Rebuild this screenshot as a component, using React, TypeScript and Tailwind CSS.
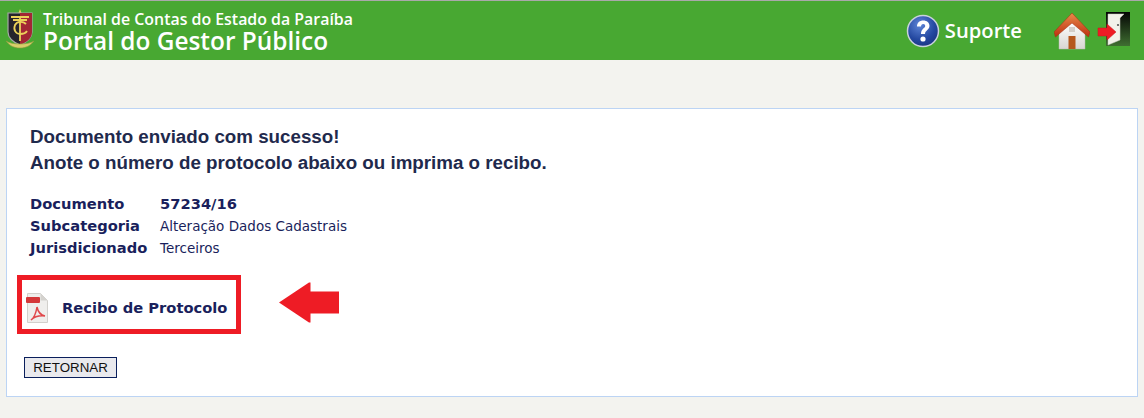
function Crest() {
  return (
    <svg width="30" height="43" viewBox="0 0 30 43" className="shrink-0">
      <path d="M15 0l1.500 4h-3z" fill="#e8d060" />
      <path d="M3 4h24v19c0 6-5 10-12 13C8 33 3 29 3 23z" fill="#26242c" stroke="#a5a8a6" strokeWidth="1.200" />
      <path d="M15 4h12v19c0 6-5 10-12 13z" fill="#a32634" />
      <path d="M6 8h18M8 11h14M15 8v24" fill="none" stroke="#ecd25a" strokeWidth="1.800" />
      <path d="M21 15c-3-3-9-3-11 1-2 5 1 9 5 9s6-1 7-3" fill="none" stroke="#ecd25a" strokeWidth="1.800" />
      <path d="M1 32c4 5 8 7 14 7s10-2 14-7c-3 2-8 3-14 3S4 34 1 32z" fill="#d8cf6a" stroke="#8e9a3c" strokeWidth="0.600" />
    </svg>
  );
}

function HelpIcon() {
  return (
    <svg width="34" height="34" viewBox="0 0 34 34" className="shrink-0">
      <defs>
        <radialGradient id="helpBall" cx="0.4" cy="0.3" r="0.8">
          <stop offset="0" stopColor="#5f86d8" />
          <stop offset="0.6" stopColor="#2448a0" />
          <stop offset="1" stopColor="#17307c" />
        </radialGradient>
      </defs>
      <circle cx="17" cy="17" r="15.500" fill="url(#helpBall)" stroke="#c9d2dc" strokeWidth="1.500" />
      <path d="M11 12.500c0-4 3-6 6.200-6 3.700 0 6.300 2.200 6.300 5.300 0 4.400-4.500 4.500-4.500 8.200h-4c0-5.500 4.200-5.700 4.200-8 0-1.200-.8-2-2-2-1.300 0-2.100.9-2.200 2.500z" fill="#fff" />
      <circle cx="17" cy="25" r="2.600" fill="#fff" />
    </svg>
  );
}

function HomeIcon() {
  return (
    <svg width="36" height="38" viewBox="0 0 36 38" className="shrink-0">
      <defs>
        <linearGradient id="homeWall" x1="0" y1="0" x2="0" y2="1">
          <stop offset="0" stopColor="#ffffff" />
          <stop offset="1" stopColor="#d9d6d2" />
        </linearGradient>
        <linearGradient id="homeRoof" x1="0" y1="0" x2="0" y2="1">
          <stop offset="0" stopColor="#e88a4a" />
          <stop offset="1" stopColor="#bd2f10" />
        </linearGradient>
      </defs>
      <path d="M5 20L18 9l13 11v17H5z" fill="url(#homeWall)" stroke="#b9b5b0" strokeWidth="0.500" />
      <rect x="14.500" y="24" width="7" height="13" fill="#b5571c" />
      <path d="M15 15h6v5h-6z" fill="#d3cec8" />
      <path d="M18 1L0 20l1.500 5L18 11l16.500 14 1.500-5z" fill="url(#homeRoof)" stroke="#a32d10" strokeWidth="0.500" />
    </svg>
  );
}

function ExitIcon() {
  return (
    <svg width="34" height="36" viewBox="0 0 34 36" className="shrink-0">
      <defs>
        <linearGradient id="exitFrame" x1="0" y1="0" x2="0" y2="1">
          <stop offset="0" stopColor="#050505" />
          <stop offset="1" stopColor="#3f6f31" />
        </linearGradient>
      </defs>
      <rect x="9" y="0" width="24" height="34" fill="url(#exitFrame)" />
      <path d="M11 2h16l-4 4v22l-12 5z" fill="#f2f1ea" stroke="#c9c8c0" strokeWidth="0.500" />
      <circle cx="21" cy="13" r="1.100" fill="#555" />
      <path d="M1 16h9v-4l9 8-9 8v-4H1z" fill="#ee1c25" stroke="#c9141c" strokeWidth="0.500" />
    </svg>
  );
}

function PdfIcon() {
  return (
    <svg width="22" height="30" viewBox="0 0 22 30" className="shrink-0">
      <path d="M1.500 0.500h13l7 7v22h-20z" fill="#efeeec" stroke="#d2d0cc" strokeWidth="1" />
      <path d="M14.500 0.500l7 7h-7z" fill="#d4d2ce" />
      <rect x="0" y="4" width="14" height="6" rx="1" fill="#d4383a" />
      <path d="M5 27c3-2 5-7 6-13 1 5 3 8 8 9-5-.5-10 0-14 4z" fill="none" stroke="#e0474a" strokeWidth="1.500" />
    </svg>
  );
}

function RedArrow() {
  return (
    <svg width="60" height="41" viewBox="0 0 60 41" className="shrink-0">
      <path d="M0 20.500L30 0.500h1.500v9H60v22H31.500v9H30z" fill="#ee1c25" />
    </svg>
  );
}

export default function App() {
  return (
    <div className="h-[418px] w-[1144px] overflow-hidden bg-[#f3f3ef] font-['DejaVu_Sans',sans-serif] text-[#1a1f5c]">
      <header className="flex h-[60px] items-center border-t border-t-[#a9a9a9] bg-[#48a832] pl-[5px] pr-[13px]">
        <Crest />
        <div className="ml-[8px] mt-[2px] flex flex-col font-['Open_Sans',sans-serif] font-semibold text-white">
          <span className="text-[15.900px] leading-[17px]">Tribunal de Contas do Estado da Paraíba</span>
          <span className="text-[24.400px] leading-[25px]">Portal do Gestor Público</span>
        </div>
        <div className="ml-auto flex items-center">
          <HelpIcon />
          <span className="ml-[5px] font-['Open_Sans',sans-serif] text-[20.200px] font-semibold text-white">Suporte</span>
          <div className="ml-[32px] flex items-start gap-[7px]">
            <HomeIcon />
            <ExitIcon />
          </div>
        </div>
      </header>

      <main className="mx-[6px] mt-[48px] h-[289px] border border-[#bcd4f4] bg-white pl-[23px] pt-[15px]">
        <h1 className="font-['Liberation_Sans',sans-serif] text-[18.750px] font-bold leading-[26px] text-[#1f2a4d]">
          Documento enviado com sucesso!
          <br />
          Anote o número de protocolo abaixo ou imprima o recibo.
        </h1>

        <dl className="mt-[17px] grid grid-cols-[130px_1fr] text-[14.700px] leading-[22px]">
          <dt className="font-bold">Documento</dt>
          <dd className="font-bold">57234/16</dd>
          <dt className="font-bold">Subcategoria</dt>
          <dd className="text-[13.500px]">Alteração Dados Cadastrais</dd>
          <dt className="font-bold">Jurisdicionado</dt>
          <dd className="text-[13.500px]">Terceiros</dd>
        </dl>

        <div className="-ml-[13px] mt-[16px] flex items-start gap-[38px]">
          <div className="flex h-[59px] w-[224px] items-center border-[5px] border-[#ee1c25] pl-[4px] pt-[7px]">
            <PdfIcon />
            <a className="ml-[14px] text-[14.700px] font-bold">Recibo de Protocolo</a>
          </div>
          <div className="mt-[7px]">
            <RedArrow />
          </div>
        </div>

        <button className="-ml-[6px] mt-[23px] block h-[21px] w-[93px] border border-[#0a1f5c] bg-[#e9e9ed] font-['Liberation_Sans',sans-serif] text-[13.330px] leading-none text-[#111]">
          RETORNAR
        </button>
      </main>
    </div>
  );
}
